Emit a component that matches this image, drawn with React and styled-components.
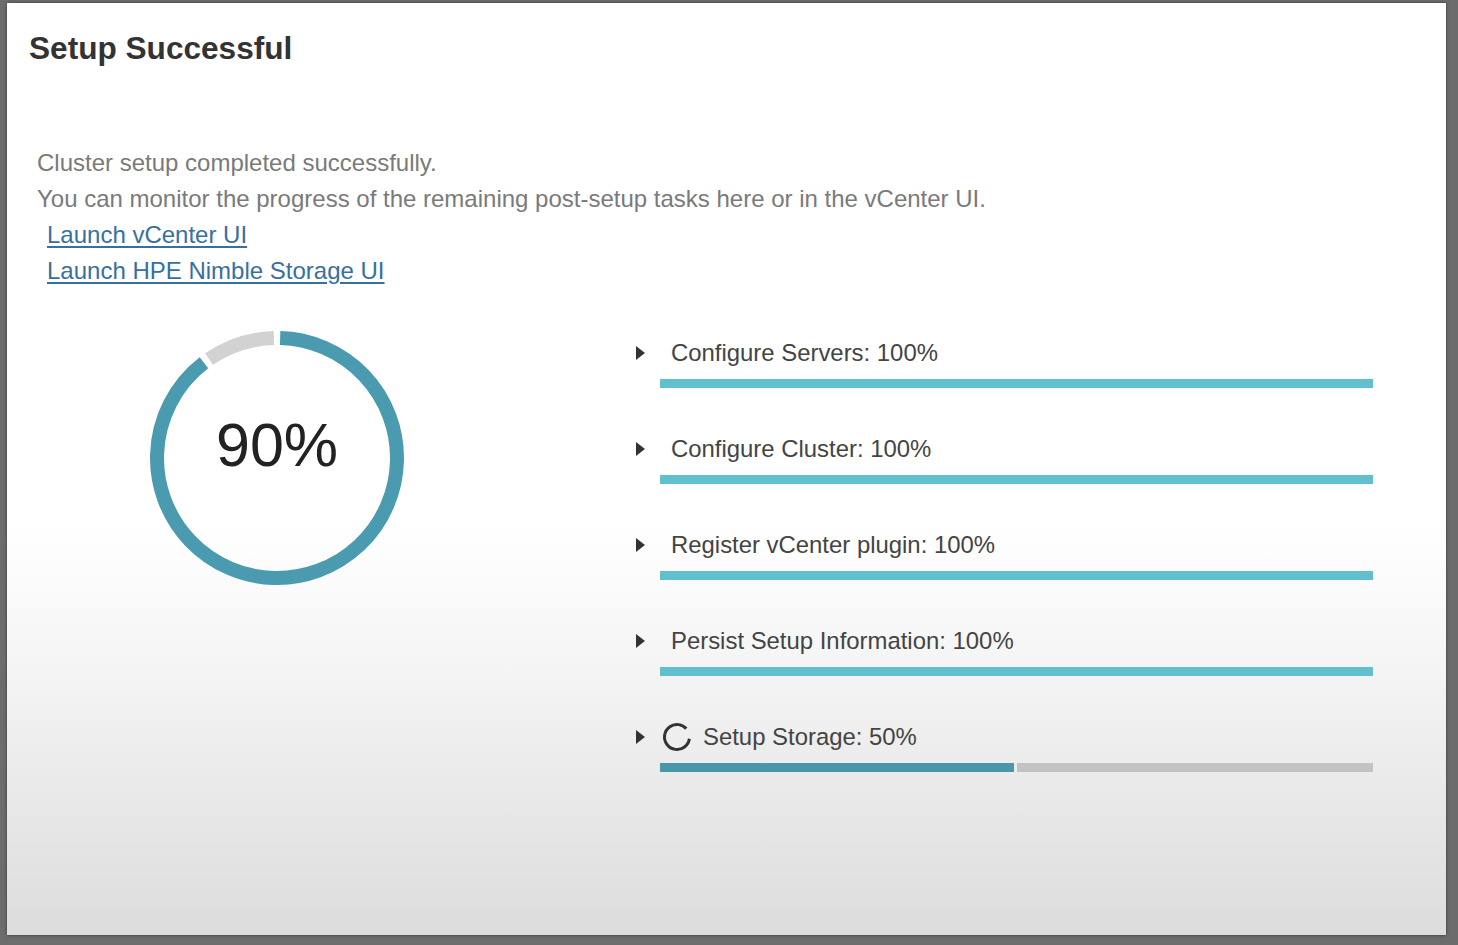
import React from 'react'
import styled, { createGlobalStyle } from 'styled-components'

const GlobalStyle = createGlobalStyle`
  html, body {
    margin: 0;
    padding: 0;
    background: #6c6c6c;
  }
  * { box-sizing: border-box; }
`

const tasks = [
  { name: 'Configure Servers', pct: 100 },
  { name: 'Configure Cluster', pct: 100 },
  { name: 'Register vCenter plugin', pct: 100 },
  { name: 'Persist Setup Information', pct: 100 },
  { name: 'Setup Storage', pct: 50, running: true },
]

function Ring({ pct }) {
  const done = pct * 3.6 - 3
  const rest = 360 - pct * 3.6 - 3
  return (
    <svg width="254" height="254" viewBox="0 0 254 254">
      <circle
        cx="127" cy="127" r="120" fill="none"
        stroke="#4b9bb0" strokeWidth="14" pathLength="360"
        strokeDasharray={`${done} 360`}
        transform="rotate(-88.5 127 127)"
      />
      <circle
        cx="127" cy="127" r="120" fill="none"
        stroke="#d2d2d2" strokeWidth="14" pathLength="360"
        strokeDasharray={`${rest} 360`}
        transform={`rotate(${-90 + pct * 3.6 + 1.5} 127 127)`}
      />
    </svg>
  )
}

function Spinner() {
  return (
    <svg width="30" height="30" viewBox="0 0 30 30">
      <circle
        cx="15" cy="15" r="12.5" fill="none" stroke="#333"
        strokeWidth="3" pathLength="360" strokeDasharray="310 50"
        transform="rotate(8 15 15)"
      />
    </svg>
  )
}

function App() {
  return (
    <Page>
      <GlobalStyle />
      <Dialog>
        <Title>Setup Successful</Title>
        <Message>
          <Line>Cluster setup completed successfully.</Line>
          <Line>You can monitor the progress of the remaining post-setup tasks here or in the vCenter UI.</Line>
          <LinkLine><a href="#vcenter">Launch vCenter UI</a></LinkLine>
          <LinkLine><a href="#nimble">Launch HPE Nimble Storage UI</a></LinkLine>
        </Message>
        <Content>
          <RingBox>
            <Ring pct={90} />
            <RingLabel>90%</RingLabel>
          </RingBox>
          <TaskList>
            {tasks.map((t) => (
              <Task key={t.name}>
                <Caret />
                <TaskHead>
                  {t.running && <Spinner />}
                  <TaskName $running={t.running}>{t.name}: {t.pct}%</TaskName>
                </TaskHead>
                <span />
                <Bar>
                  <Fill $pct={t.pct} $running={t.running} />
                  {t.pct < 100 && <Track />}
                </Bar>
              </Task>
            ))}
          </TaskList>
        </Content>
      </Dialog>
    </Page>
  )
}

const Page = styled.div`
  height: 945px;
  padding: 3px 12px 10px 7px;
  background: #6c6c6c;
`

const Dialog = styled.div`
  height: 100%;
  display: flex;
  flex-direction: column;
  background: linear-gradient(to bottom, #ffffff 0%, #ffffff 56%, #f4f4f4 72%, #dcdcdc 100%);
  box-shadow: 0 0 3px rgba(0, 0, 0, 0.5);
  font-family: "Liberation Sans", Arial, sans-serif;
`

const Title = styled.h1`
  margin: 27px 0 0 22px;
  font-size: 31.6px;
  line-height: 36px;
  font-weight: bold;
  color: #333;
`

const Message = styled.div`
  margin: 79px 0 0 30px;
  display: flex;
  flex-direction: column;
`

const Line = styled.div`
  font-size: 24px;
  line-height: 36px;
  color: #7a7a7a;
`

const LinkLine = styled.div`
  padding-left: 10px;
  font-size: 24px;
  line-height: 36px;

  a {
    color: #37709f;
    text-decoration: underline;
    text-underline-offset: 3px;
  }
`

const Content = styled.div`
  margin-top: 42px;
  padding-left: 143px;
  display: flex;
  align-items: flex-start;
  gap: 232px;
`

const RingBox = styled.div`
  position: relative;
  width: 254px;
  height: 254px;
`

const RingLabel = styled.div`
  position: absolute;
  inset: 0;
  display: flex;
  align-items: center;
  justify-content: center;
  padding-bottom: 26px;
  font-size: 61px;
  color: #222;
`

const TaskList = styled.div`
  margin-top: 8px;
  display: flex;
  flex-direction: column;
`

const Task = styled.div`
  display: grid;
  grid-template-columns: 24px 714px;
  grid-template-rows: 28px 9px;
  row-gap: 12px;
  margin-bottom: 47px;
  align-items: center;
`

const Caret = styled.span`
  width: 0;
  height: 0;
  border-left: 9px solid #333;
  border-top: 7px solid transparent;
  border-bottom: 7px solid transparent;
  margin-top: -1px;
`

const TaskHead = styled.div`
  display: flex;
  align-items: center;
  gap: 11px;
  padding-left: 2px;
`

const TaskName = styled.span`
  padding-left: ${(p) => (p.$running ? '0' : '9px')};
  font-size: 23.9px;
  line-height: 28px;
  color: #444;
  white-space: nowrap;
`

const Bar = styled.div`
  display: flex;
  height: 9px;
  width: 713px;
`

const Fill = styled.div`
  width: ${(p) => (p.$pct < 100 ? `calc(${p.$pct}% - 3px)` : '100%')};
  height: 100%;
  background: ${(p) => (p.$running ? '#4a97a9' : '#61c0cd')};
`

const Track = styled.div`
  flex: 1;
  margin-left: 3px;
  height: 100%;
  background: #c3c3c3;
`

export default App
